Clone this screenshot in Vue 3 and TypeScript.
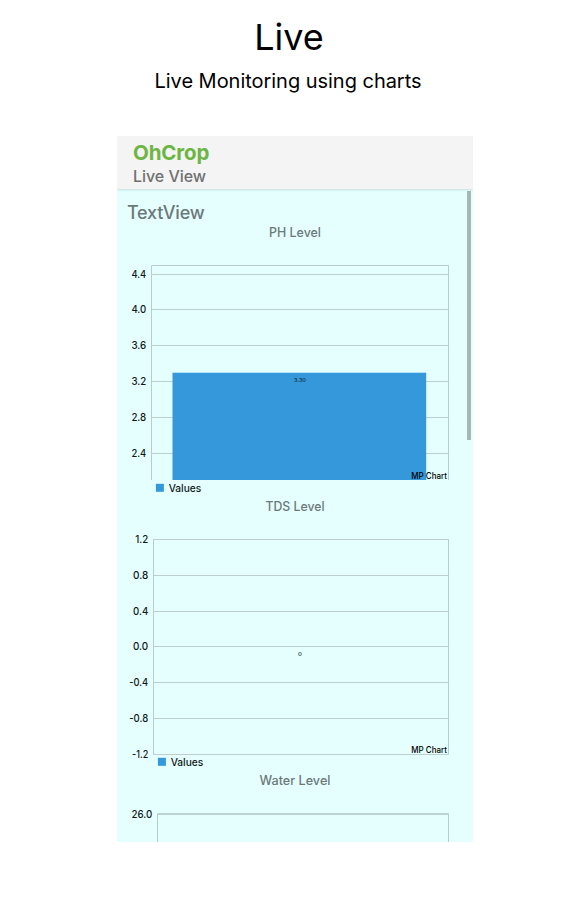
<script setup lang="ts">
interface Tick { label: string; y: number; width: number }
interface Chart {
  title: string
  titleWidth: number
  left: number
  top: number
  bottom: number
  ticks: Tick[]
  bar?: { x: number; y: number; width: number; height: number }
  value?: { text: string; y: number; width: number }
}

const charts: Chart[] = [
  {
    title: 'PH Level', titleWidth: 52, left: 34.5, top: 24.5, bottom: 239,
    ticks: ['4.4', '4.0', '3.6', '3.2', '2.8', '2.4'].map((label, i) => ({ label, y: [33.5, 68.5, 104.5, 140.5, 176.5, 212.5][i], width: 14.8 })),
    bar: { x: 55.5, y: 131.7, width: 253.7, height: 107.3 },
    value: { text: '3.30', y: 140.5, width: 11.8 },
  },
  {
    title: 'TDS Level', titleWidth: 59, left: 36.5, top: 24.5, bottom: 239.5,
    ticks: ['1.2', '0.8', '0.4', '0.0', '-0.4', '-0.8', '-1.2'].map((label, i) => ({ label, y: [24.5, 60.5, 96.5, 131.5, 167.5, 203.5, 239.5][i], width: [13, 15.2, 15.2, 15.2, 19, 19, 16.2][i] })),
    value: { text: '0', y: 141, width: 3.8 },
  },
  {
    title: 'Water Level', titleWidth: 71, left: 40.5, top: 24.7, bottom: 300,
    ticks: [{ label: '26.0', y: 25.5, width: 20.8 }],
  },
]
const right = 331.5
</script>

<template>
  <main class="page">
    <h1>Live</h1>
    <p class="subtitle">Live Monitoring using charts</p>
    <section class="phone">
      <header class="bar">
        <div class="brand">OhCrop</div>
        <div class="view">Live View</div>
      </header>
      <div class="content">
        <div class="textview">TextView</div>
        <article v-for="c in charts" :key="c.title" class="card">
          <svg class="title" width="356" height="16">
            <text x="178" y="12" text-anchor="middle" :textLength="c.titleWidth" lengthAdjust="spacingAndGlyphs">{{ c.title }}</text>
          </svg>
          <svg class="chart" width="356" height="258">
            <path class="frame" :d="`M${c.left} ${c.bottom}V${c.top}H${right}V${c.bottom}`" />
            <g v-for="t in c.ticks" :key="t.label">
              <line class="grid" :x1="c.left" :x2="right" :y1="t.y" :y2="t.y" />
              <text class="tick" :x="c.left - 5.3" :y="t.y + 3" text-anchor="end" :textLength="t.width" lengthAdjust="spacingAndGlyphs">{{ t.label }}</text>
            </g>
            <rect v-if="c.bar" class="fill" v-bind="c.bar" />
            <text v-if="c.value" class="value" x="183" :y="c.value.y" text-anchor="middle" :textLength="c.value.width" lengthAdjust="spacingAndGlyphs">{{ c.value.text }}</text>
            <g v-if="c.value">
              <text class="desc" x="330" y="237.8" text-anchor="end" textLength="35.7" lengthAdjust="spacingAndGlyphs">MP Chart</text>
              <rect class="fill" :x="c.left + 4.4" y="242.8" width="8" height="8" />
              <text class="legend" :x="c.left + 17.2" y="250.8" textLength="32.5" lengthAdjust="spacingAndGlyphs">Values</text>
            </g>
          </svg>
        </article>
        <div class="thumb"></div>
      </div>
    </section>
  </main>
</template>

<style>
body { background: #fff; }
</style>

<style scoped>
.page { width: 574px; height: 924px; overflow: hidden; font-family: Inter, "Liberation Sans", sans-serif; color: #000; }
h1 { margin: 0; padding: 15px 0 0 4px; font-size: 36px; line-height: 44px; font-weight: 400; text-align: center; }
.subtitle { margin: 0; padding: 9px 0 0 2px; font-size: 20px; line-height: 26px; letter-spacing: -.03px; text-align: center; }
.phone { width: 356px; height: 705.5px; margin: 42px 0 0 117px; overflow: hidden; background: #e5ffff; display: flex; flex-direction: column; }
.bar { position: relative; z-index: 1; flex: none; box-sizing: border-box; height: 53.4px; padding: 4px 16px 0; background: #f4f4f4; box-shadow: 0 1px 2px rgba(0, 0, 0, .14); }
.brand { color: #6db644; font-size: 20.5px; line-height: 25px; font-weight: 700; letter-spacing: -.12px; }
.view { color: #707070; font-size: 16px; line-height: 22px; font-weight: 500; letter-spacing: -.04px; }
.content { position: relative; flex: 1; min-height: 0; overflow: hidden; }
.textview { height: 35.6px; padding-left: 10px; box-sizing: border-box; padding-top: 11.6px; font-size: 18px; line-height: 24px; font-weight: 500; letter-spacing: -.25px; color: #6b7979; }
.card { height: 274px; display: flex; flex-direction: column; }
svg { display: block; flex: none; }
.title { font-size: 12.7px; font-weight: 500; fill: #6b7979; }
.frame { fill: none; stroke: #b9cccc; stroke-width: 1; }
.grid { stroke: #bdd0d0; stroke-width: 1; }
.tick { font-size: 10px; font-weight: 550; fill: #101818; }
.fill { fill: #3598db; }
.value { font-size: 5.3px; fill: #132c3d; font-weight: 500; }
.desc { font-size: 8.5px; font-weight: 500; fill: #000; }
.legend { font-size: 10px; font-weight: 550; fill: #101818; }
.thumb { position: absolute; top: 1.6px; right: 2px; width: 4px; height: 249px; background: #a5b8b7; }
</style>
